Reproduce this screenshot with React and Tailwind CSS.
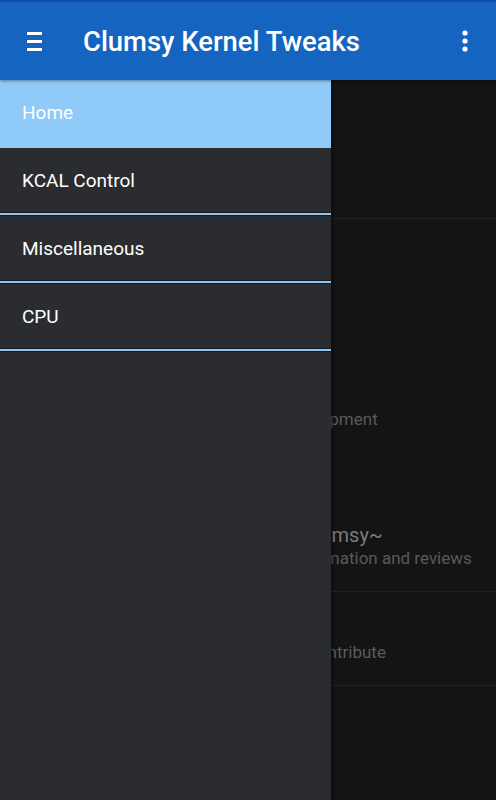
import React from "react"

const FONT = { fontFamily: "Roboto, 'Noto Sans', sans-serif" }

const MENU = ["Home", "KCAL Control", "Miscellaneous", "CPU"]

function Divider() {
  return (
    <div className="flex flex-col">
      <div className="h-px bg-[#1b1b1d]" />
      <div className="h-[2px] bg-[#8fc4f2]" />
      <div className="h-px bg-[#1d1a1a]" />
    </div>
  )
}

function MenuIcon() {
  return (
    <svg width="16" height="20" viewBox="0 0 16 20" className="block">
      <rect x="0" y="0" width="15" height="3" fill="#fff" />
      <rect x="0" y="8" width="15" height="3" fill="#fff" />
      <rect x="0" y="16" width="15" height="3" fill="#fff" />
    </svg>
  )
}

function MoreIcon() {
  return (
    <svg width="6" height="22" viewBox="0 0 6 22" className="block">
      <circle cx="3" cy="3" r="2.6" fill="#fff" />
      <circle cx="3" cy="11" r="2.6" fill="#fff" />
      <circle cx="3" cy="19" r="2.6" fill="#fff" />
    </svg>
  )
}

export default function App() {
  return (
    <div className="relative w-[496px] h-[800px] overflow-hidden bg-[#141414]" style={FONT}>
      {/* Toolbar */}
      <div className="relative z-20 h-[80px] flex flex-col bg-[#1565c0] shadow-[0_1px_3px_rgba(0,0,0,0.4)]">
        <div className="h-[2px] bg-[#0f4ea6]" />
        <div className="flex-1 flex items-center">
          <div className="w-[83px] pl-[27px] pt-[1px]">
            <MenuIcon />
          </div>
          <h1 className="flex-1 text-white text-[27.4px] font-medium leading-none pt-[3px]">
            Clumsy Kernel Tweaks
          </h1>
          <div className="pr-[28px]">
            <MoreIcon />
          </div>
        </div>
      </div>

      {/* Page content behind the drawer */}
      <div className="flex flex-col">
        <div className="h-[139px] border-b border-[#222]" />
        <div className="pt-[189px] pb-[22px] pl-[16px] flex flex-col border-b border-[#222]">
          <span className="text-[17px] leading-[22px] text-[#5a5a5a] whitespace-nowrap">Clumsy Kernel - a custom kernel in development</span>
          <div className="h-[93px]" />
          <span className="text-[20px] leading-[24px] text-[#7b7b7b] whitespace-nowrap">Clumsy kernel threads on XDA ~Clumsy~</span>
          <span className="text-[17px] leading-[22px] text-[#5a5a5a] whitespace-nowrap">See the official XDA thread for more information and reviews</span>
        </div>
        <div className="pt-[49px] pb-[22px] pl-[16px] border-b border-[#222]">
          <span className="block text-[17px] leading-[22px] text-[#5a5a5a] whitespace-nowrap">Kernel source is on GitHub, feel free to contribute</span>
        </div>
      </div>

      {/* Navigation drawer */}
      <div className="absolute left-0 top-[80px] bottom-0 z-10 w-[331px] bg-[#2b2c2f] shadow-[2px_0_2px_rgba(0,0,0,0.35)]">
        {MENU.map((item, i) => (
          <div key={item}>
            <div className={`h-[64px] flex items-center pl-[22px] pt-[3px] text-[19px] text-white ${i === 0 ? "bg-[#90caf9]" : ""}`}>
              {item}
            </div>
            {i === 0 ? <div className="h-[4px] bg-[#90caf9]" /> : <Divider />}
          </div>
        ))}
      </div>
    </div>
  )
}
